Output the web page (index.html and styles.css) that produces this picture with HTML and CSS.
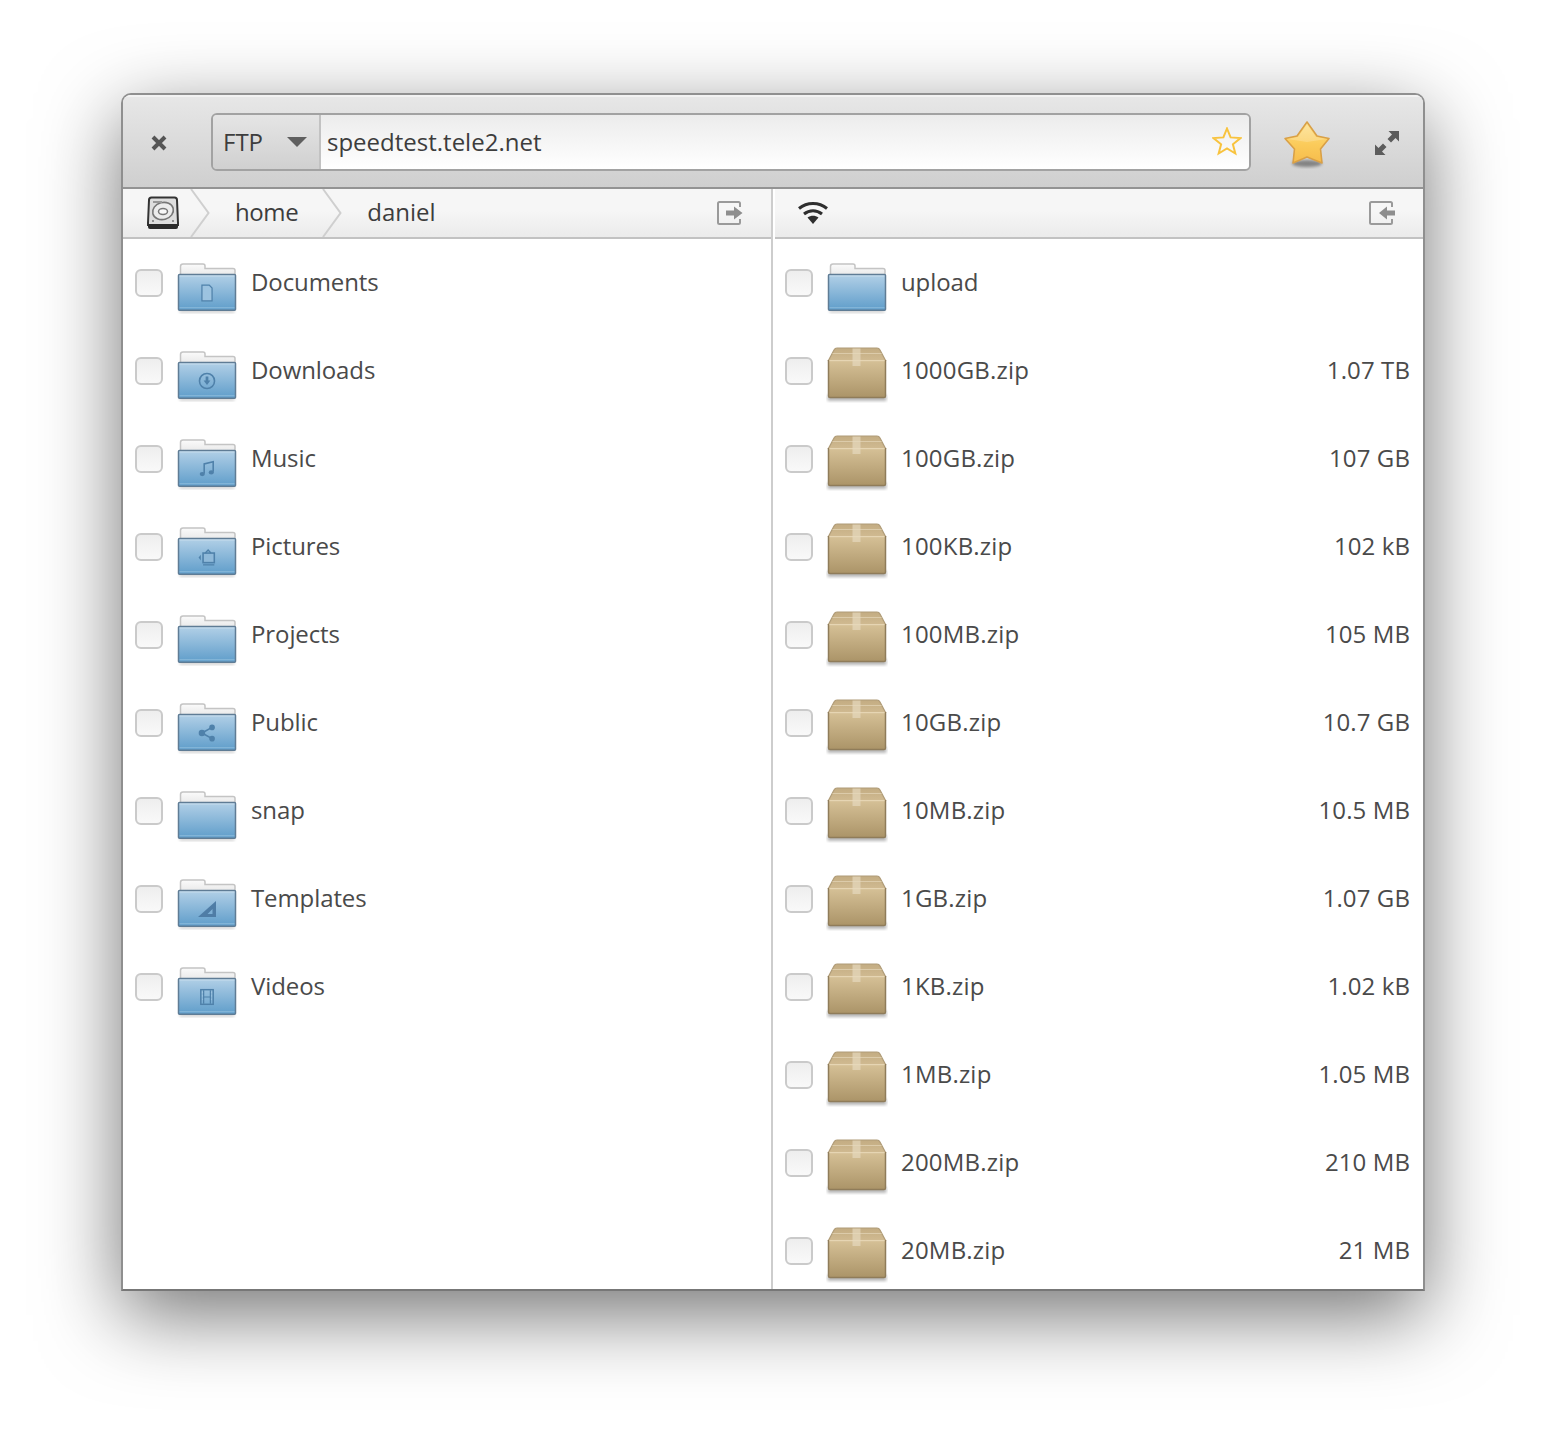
FILE: index.html
```html
<!DOCTYPE html>
<html lang="en">
<head>
<meta charset="utf-8">
<title>FTP speedtest.tele2.net</title>
<link rel="stylesheet" href="styles.css">
</head>
<body>
<svg class="sprite" width="0" height="0" aria-hidden="true">
  <defs>
    <linearGradient id="gFolder" x1="0" y1="0" x2="0" y2="1">
      <stop offset="0" stop-color="#b2d0e7"/><stop offset="1" stop-color="#5f9dca"/>
    </linearGradient>
    <linearGradient id="gPage" x1="0" y1="0" x2="0" y2="1">
      <stop offset="0" stop-color="#fbfbfb"/><stop offset="1" stop-color="#e9e9e9"/>
    </linearGradient>
    <linearGradient id="gBox" x1="0" y1="0" x2="0" y2="1">
      <stop offset="0" stop-color="#d6c197"/><stop offset="1" stop-color="#ab9468"/>
    </linearGradient>
    <linearGradient id="gLid" x1="0" y1="0" x2="0" y2="1">
      <stop offset="0" stop-color="#c3ac82"/><stop offset="1" stop-color="#d0ba91"/>
    </linearGradient>
    <linearGradient id="gStar" x1="0" y1="0" x2="0" y2="1">
      <stop offset="0" stop-color="#fde08a"/><stop offset=".55" stop-color="#fbcb5a"/><stop offset="1" stop-color="#f6bc4c"/>
    </linearGradient>
    <filter id="blurShadow" x="-30%" y="-50%" width="160%" height="200%"><feGaussianBlur stdDeviation="1.6"/></filter>
    <symbol id="folder" viewBox="0 0 60 52">
      <rect x="2.500" y="47" width="55" height="4" fill="#000" opacity=".16" filter="url(#blurShadow)"/>
      <path d="M3.500 13V4.500Q3.500 2 6 2H26Q28 2 28 4V6.500H56Q58 6.500 58 8.500V13Z" fill="url(#gPage)" stroke="#c4c4c4" stroke-width="1.500"/>
      <rect x="1.500" y="12.500" width="57" height="35.750" rx="1" fill="url(#gFolder)" stroke="#5f7c95" stroke-width="1.500"/>
      <rect x="2.500" y="13.500" width="55" height="1" fill="#cfe2f0" opacity=".75"/>
      <rect x="2.500" y="45.250" width="55" height="1" fill="#8fbcdc" opacity=".9"/>
    </symbol>
    <symbol id="box" viewBox="0 0 62 58">
      <rect x="1.500" y="50" width="59" height="6" fill="#000" opacity=".28" filter="url(#blurShadow)"/>
      <path d="M11 3H51Q53 3 54 5L59.500 15.500H2.500L8 5Q9 3 11 3Z" fill="url(#gLid)" stroke="#b09c78" stroke-width="1.200"/>
      <path d="M6.500 8.500H55.500" stroke="#dccbaa" stroke-width="1.200"/>
      <path d="M2.500 15H59.500V51Q59.500 52.500 58 52.500H4Q2.500 52.500 2.500 51Z" fill="url(#gBox)"/>
      <path d="M2.500 15V51Q2.500 52.500 4 52.500H58Q59.500 52.500 59.500 51V15" fill="none" stroke="#8f7c5a" stroke-width="1.500"/>
      <rect x="3.500" y="15" width="55" height="1.200" fill="#e6d5b3"/>
      <rect x="26.500" y="3.500" width="8" height="17.500" fill="#e6d8bd" opacity=".7"/>
    </symbol>
  </defs>
</svg>

<main class="window">
  <header class="toolbar">
    <button class="close-btn" type="button" aria-label="Close">
      <svg viewBox="0 0 16 16" width="16" height="16"><path d="M2 2L14 14M14 2L2 14" fill="none" stroke="#555" stroke-width="4"/></svg>
    </button>
    <div class="location">
      <div class="protocol">
        <span class="lifted">FTP</span>
        <svg class="caret" viewBox="0 0 20 10" width="20" height="10"><path d="M0 0H20L10 10Z" fill="#5f5f5f"/></svg>
      </div>
      <div class="address">
        <span class="lifted">speedtest.tele2.net</span>
        <svg class="star-small" viewBox="0 0 30 30" width="30" height="30"><path d="M15 1.500L18.600 10.400 28.500 11.100 20.900 17.300 23.300 26.500 15 21.500 6.700 26.500 9.100 17.300 1.500 11.100 11.400 10.400Z" fill="none" stroke="#f8c33e" stroke-width="2"/></svg>
      </div>
    </div>
    <svg class="star-big" viewBox="0 0 50 50" width="50" height="50">
      <ellipse cx="25" cy="44.500" rx="15" ry="3.500" fill="#000" opacity=".38" filter="url(#blurShadow)"/>
      <path d="M25 3L35 17 47 19.500 38.500 30 40 44 25 38 11 44 12.500 30 3 19.500 15 17Z" fill="url(#gStar)" stroke="#d9a047" stroke-width="1.600" stroke-linejoin="round"/>
      <path d="M25 5.500L16 18 5.500 20 25 23 44.500 20 34 18Z" fill="#fff" opacity=".2"/>
    </svg>
    <svg class="expand" viewBox="0 0 26 26" width="26" height="26">
      <path d="M14.500 1H25V11.500L21.500 8 17 12.500 13.500 9 18 4.500Z M11.500 25H1V14.500L4.500 18 9 13.500 12.500 17 8 21.500Z" fill="#5c5c5c"/>
    </svg>
  </header>

  <div class="panes">
    <section class="pane pane-left">
      <nav class="pathbar">
        <svg class="hdd" viewBox="0 0 32 34" width="32" height="34">
          <path d="M4.500 1.500H27.500Q30 1.500 30 4L31 27V29H1V27L2 4Q2 1.500 4.500 1.500Z" fill="#dedede" stroke="#333" stroke-width="2"/>
          <path d="M1 28H31V31Q31 33 29 33H3Q1 33 1 31Z" fill="#2b2b2b"/>
          <ellipse cx="16" cy="15" rx="10.500" ry="8.500" fill="#ececec" stroke="#777" stroke-width="1.600" transform="rotate(-15 16 15)"/>
          <ellipse cx="16" cy="15.500" rx="4.500" ry="3" fill="#f8f8f8" stroke="#777" stroke-width="1.500"/>
          <path d="M6 6H15" stroke="#999" stroke-width="2"/>
          <path d="M5 25H7M25 25H27" stroke="#777" stroke-width="1.500"/>
        </svg>
        <svg class="crumb-sep crumb-sep-first" viewBox="0 0 20 48" width="20" height="48"><path d="M1 0L18.500 24 1 48" fill="none" stroke="#cfcfcf" stroke-width="2"/></svg>
        <span class="crumb crumb-first">home</span>
        <svg class="crumb-sep" viewBox="0 0 20 48" width="20" height="48"><path d="M1 0L18.500 24 1 48" fill="none" stroke="#cfcfcf" stroke-width="2"/></svg>
        <span class="crumb crumb-next">daniel</span>
        <svg class="pane-action" viewBox="0 0 26 24" width="26" height="24">
          <path d="M23 6V2.500Q23 1 21.500 1H2.500Q1 1 1 2.500V21.500Q1 23 2.500 23H21.500Q23 23 23 21.500V18" fill="none" stroke="#9a9a9a" stroke-width="2"/>
          <path d="M9 9.500H17V5.500L25.500 12 17 18.500V14.500H9Z" fill="#8e8e8e"/>
        </svg>
      </nav>
      <ul class="files">
        <li class="row"><span class="check"></span><span class="icon"><svg class="ficon"><use href="#folder"/></svg><svg class="emblem" viewBox="0 0 16 16"><path d="M3.500 1H10L12.500 3.500V15H3.500Z" fill="#9cc3e0" stroke="#4f81aa" stroke-width="1.100"/></svg></span><span class="name">Documents</span></li>
        <li class="row"><span class="check"></span><span class="icon"><svg class="ficon"><use href="#folder"/></svg><svg class="emblem" viewBox="0 0 16 16"><circle cx="8" cy="8" r="6.700" fill="none" stroke="#4f81aa" stroke-width="1.400"/><path d="M6.800 4H9.200V7.500H11L8 11.500 5 7.500H6.800Z" fill="#4f81aa"/></svg></span><span class="name">Downloads</span></li>
        <li class="row"><span class="check"></span><span class="icon"><svg class="ficon"><use href="#folder"/></svg><svg class="emblem" viewBox="0 0 16 16"><path d="M5.500 12V3.500L13.500 1.500V10.500" fill="none" stroke="#4f81aa" stroke-width="1.400"/><ellipse cx="3.800" cy="12.500" rx="2.300" ry="1.900" fill="#4f81aa"/><ellipse cx="11.800" cy="11" rx="2.300" ry="1.900" fill="#4f81aa"/></svg></span><span class="name">Music</span></li>
        <li class="row"><span class="check"></span><span class="icon"><svg class="ficon"><use href="#folder"/></svg><svg class="emblem" viewBox="0 0 16 16"><rect x="4.500" y="4.500" width="10" height="8.500" fill="#8fb9d9" stroke="#4f81aa" stroke-width="1.400"/><path d="M6.500 4.500L9 1.800 11.500 4.500M4.500 15H14.500" fill="none" stroke="#4f81aa" stroke-width="1.200"/><path d="M2.500 6V11L0.500 8.500Z" fill="#4f81aa"/></svg></span><span class="name">Pictures</span></li>
        <li class="row"><span class="check"></span><span class="icon"><svg class="ficon"><use href="#folder"/></svg></span><span class="name">Projects</span></li>
        <li class="row"><span class="check"></span><span class="icon"><svg class="ficon"><use href="#folder"/></svg><svg class="emblem" viewBox="0 0 16 16"><path d="M12.500 3L3.500 8 12.500 13" fill="none" stroke="#4f81aa" stroke-width="1.500"/><circle cx="12.500" cy="3" r="2.500" fill="#4f81aa"/><circle cx="3.500" cy="8" r="2.900" fill="#4f81aa"/><circle cx="12.500" cy="13" r="2.500" fill="#4f81aa"/></svg></span><span class="name">Public</span></li>
        <li class="row"><span class="check"></span><span class="icon"><svg class="ficon"><use href="#folder"/></svg></span><span class="name">snap</span></li>
        <li class="row"><span class="check"></span><span class="icon"><svg class="ficon"><use href="#folder"/></svg><svg class="emblem emblem-wide" viewBox="0 0 20 18"><path d="M19 1V17H1ZM15.500 9L10.500 14H15.500Z" fill="#4f7da6" fill-rule="evenodd"/></svg></span><span class="name">Templates</span></li>
        <li class="row"><span class="check"></span><span class="icon"><svg class="ficon"><use href="#folder"/></svg><svg class="emblem" viewBox="0 0 16 16"><rect x="2.500" y="1.500" width="11" height="13" fill="none" stroke="#4f81aa" stroke-width="1.300"/><path d="M5 2V14M11 2V14M5 8H11" stroke="#4f81aa" stroke-width="1.100"/><path d="M3.500 4H4.500M3.500 7H4.500M3.500 10H4.500M11.500 4H12.500M11.500 7H12.500M11.500 10H12.500" stroke="#9cc3e0" stroke-width="1"/></svg></span><span class="name">Videos</span></li>
      </ul>
    </section>
    <div class="divider"></div>
    <section class="pane pane-right">
      <nav class="pathbar pathbar-right">
        <svg class="wifi" viewBox="0 0 32 24" width="32" height="24">
          <path d="M2 7.500C10 0.800 22 0.800 30 7.500M7 13C12.500 8.500 19.500 8.500 25 13" fill="none" stroke="#2e2e2e" stroke-width="3"/>
          <path d="M10.500 16.500C14 14 18 14 21.500 16.500L16 23Z" fill="#2e2e2e"/>
        </svg>
        <svg class="pane-action" viewBox="0 0 26 24" width="26" height="24">
          <path d="M23 6V2.500Q23 1 21.500 1H2.500Q1 1 1 2.500V21.500Q1 23 2.500 23H21.500Q23 23 23 21.500V18" fill="none" stroke="#9a9a9a" stroke-width="2"/>
          <path d="M26 9.500H18V5.500L10 12 18 18.500V14.500H26Z" fill="#8e8e8e"/>
        </svg>
      </nav>
      <ul class="files">
        <li class="row"><span class="check"></span><span class="icon"><svg class="ficon"><use href="#folder"/></svg></span><span class="name">upload</span></li>
        <li class="row"><span class="check"></span><span class="icon"><svg class="bicon"><use href="#box"/></svg></span><span class="name zip">1000GB.zip</span><span class="size">1.07 TB</span></li>
        <li class="row"><span class="check"></span><span class="icon"><svg class="bicon"><use href="#box"/></svg></span><span class="name zip">100GB.zip</span><span class="size">107 GB</span></li>
        <li class="row"><span class="check"></span><span class="icon"><svg class="bicon"><use href="#box"/></svg></span><span class="name zip">100KB.zip</span><span class="size">102 kB</span></li>
        <li class="row"><span class="check"></span><span class="icon"><svg class="bicon"><use href="#box"/></svg></span><span class="name zip">100MB.zip</span><span class="size">105 MB</span></li>
        <li class="row"><span class="check"></span><span class="icon"><svg class="bicon"><use href="#box"/></svg></span><span class="name zip">10GB.zip</span><span class="size">10.7 GB</span></li>
        <li class="row"><span class="check"></span><span class="icon"><svg class="bicon"><use href="#box"/></svg></span><span class="name zip">10MB.zip</span><span class="size">10.5 MB</span></li>
        <li class="row"><span class="check"></span><span class="icon"><svg class="bicon"><use href="#box"/></svg></span><span class="name zip">1GB.zip</span><span class="size">1.07 GB</span></li>
        <li class="row"><span class="check"></span><span class="icon"><svg class="bicon"><use href="#box"/></svg></span><span class="name zip">1KB.zip</span><span class="size">1.02 kB</span></li>
        <li class="row"><span class="check"></span><span class="icon"><svg class="bicon"><use href="#box"/></svg></span><span class="name zip">1MB.zip</span><span class="size">1.05 MB</span></li>
        <li class="row"><span class="check"></span><span class="icon"><svg class="bicon"><use href="#box"/></svg></span><span class="name zip">200MB.zip</span><span class="size">210 MB</span></li>
        <li class="row"><span class="check"></span><span class="icon"><svg class="bicon"><use href="#box"/></svg></span><span class="name zip">20MB.zip</span><span class="size">21 MB</span></li>
      </ul>
    </section>
  </div>
</main>
</body>
</html>
```
FILE: styles.css
```css
* { box-sizing: border-box; }

html, body { margin: 0; background: #fff; }

body {
  width: 1546px;
  height: 1440px;
  padding: 93px 121px 0;
  overflow: hidden;
  font-family: "Open Sans", sans-serif;
  font-size: 24px;
  color: #4a4a4a;
}

.sprite { position: absolute; }

.window {
  width: 1304px;
  height: 1198px;
  display: flex;
  flex-direction: column;
  border: 2px solid #8f8f8f;
  border-bottom-color: #777;
  border-radius: 10px 10px 0 0;
  background: #fff;
  overflow: hidden;
  box-shadow: 0 24px 80px rgba(0, 0, 0, 0.55);
}

.toolbar {
  height: 94px;
  flex: none;
  display: flex;
  align-items: center;
  background: linear-gradient(#e7e7e7, #cfcfcf);
  border-top: 2px solid #f2f2f2;
  border-bottom: 2px solid #939393;
}

.close-btn {
  width: 72px;
  margin-right: 16px;
  margin-top: 2px;
  padding: 0;
  border: 0;
  background: none;
  display: flex;
  justify-content: center;
}

.location {
  width: 1040px;
  height: 58px;
  margin-right: 31px;
  flex: none;
  display: flex;
  border: 2px solid #a2a2a2;
  border-radius: 6px;
  overflow: hidden;
}

.protocol {
  width: 108px;
  flex: none;
  display: flex;
  align-items: center;
  padding-left: 10px;
  border-right: 2px solid #c2c2c2;
  background: linear-gradient(#e5e5e5, #d0d0d0);
  color: #3d3d3d;
}

.lifted { margin-bottom: 1px; }

.caret { margin-left: 24px; }

.address {
  flex: 1;
  display: flex;
  align-items: center;
  justify-content: space-between;
  padding: 0 7px 0 6px;
  background: linear-gradient(#ececec, #ffffff);
  color: #3d3d3d;
}

.star-big { flex: none; margin-top: 3px; }

.expand { flex: none; margin-left: 42px; margin-top: 2px; }

.panes {
  flex: 1;
  min-height: 0;
  display: flex;
}

.pane { min-width: 0; overflow: hidden; }
.pane-left { width: 648px; flex: none; }
.pane-right { flex: 1; }

.divider {
  width: 2px;
  margin-right: 2px;
  flex: none;
  background: #cdcdcd;
}

.pathbar {
  height: 50px;
  display: flex;
  align-items: center;
  background: linear-gradient(#f6f6f6 45%, #ebebeb);
  border-bottom: 2px solid #c2c2c2;
  color: #3d3d3d;
}

.hdd { margin-left: 24px; flex: none; }
.crumb-sep { flex: none; margin-left: 24px; }
.crumb-sep-first { margin-left: 11px; }
.crumb { margin-bottom: 4px; }
.crumb-first { margin-left: 25px; letter-spacing: -0.4px; }
.crumb-next { margin-left: 25px; }

.pane-action { margin-left: auto; margin-right: 28px; flex: none; }

.wifi { margin-left: 22px; flex: none; }

.files { margin: 0; padding: 0; list-style: none; }

.row {
  height: 88px;
  display: flex;
  align-items: center;
  padding: 0 12px;
}

.pane-right .row { padding: 0 13px 0 10px; }

.check {
  width: 28px;
  height: 28px;
  flex: none;
  border: 2px solid #cacaca;
  border-radius: 6px;
  background: linear-gradient(#eeeeee, #f9f9f9);
}

.icon {
  width: 62px;
  height: 58px;
  margin-left: 13px;
  margin-right: 13px;
  flex: none;
  position: relative;
}

.ficon {
  display: block;
  width: 60px;
  height: 52px;
  margin: 8px 0 0 1px;
}

.bicon {
  display: block;
  width: 62px;
  height: 58px;
  margin-top: 3px;
}

.emblem {
  position: absolute;
  left: 22px;
  top: 30px;
  width: 18px;
  height: 18px;
}

.emblem-wide { left: 21px; width: 20px; }

.name {
  flex: 1;
  margin-bottom: 4px;
  letter-spacing: -0.1px;
}

.zip { letter-spacing: 0.2px; }

.size {
  flex: none;
  margin-bottom: 4px;
  letter-spacing: 0.1px;
}
```
